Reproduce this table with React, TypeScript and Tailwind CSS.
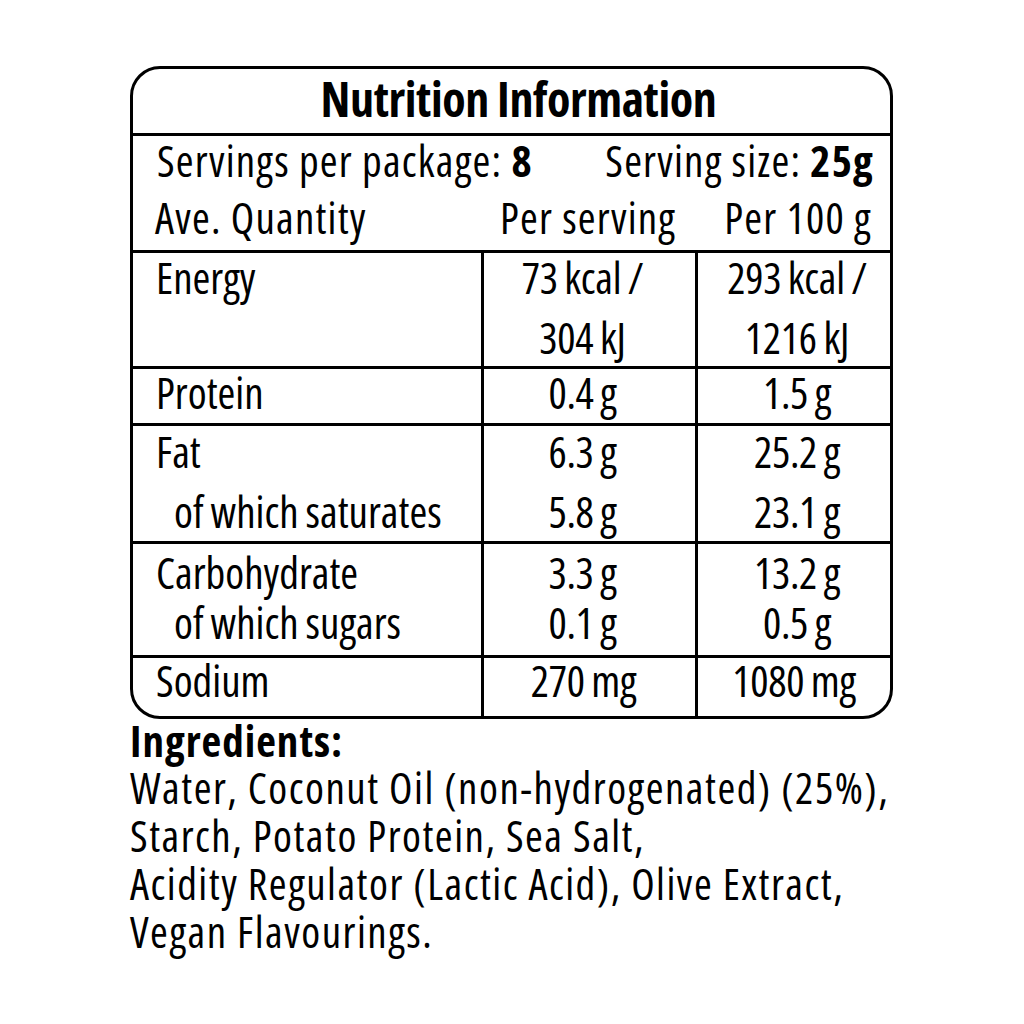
const rows = [
  {
    label: ["Energy"],
    serving: ["73 kcal /", "304 kJ"],
    per100: ["293 kcal /", "1216 kJ"],
    h: "h-[116px]",
    pt: "pt-[1px]",
    gap: "gap-[12px]",
  },
  { label: ["Protein"], serving: ["0.4 g"], per100: ["1.5 g"], h: "h-[57px]", pt: "pt-0", gap: "gap-0" },
  {
    label: ["Fat", "of which saturates"],
    serving: ["6.3 g", "5.8 g"],
    per100: ["25.2 g", "23.1 g"],
    h: "h-[118px]",
    pt: "pt-[2px]",
    gap: "gap-[12px]",
  },
  {
    label: ["Carbohydrate", "of which sugars"],
    serving: ["3.3 g", "0.1 g"],
    per100: ["13.2 g", "0.5 g"],
    h: "h-[114px]",
    pt: "pt-[5px]",
    gap: "gap-[2px]",
  },
]

function Lines({ items, gap, indent }: { items: string[]; gap: string; indent?: boolean }) {
  return (
    <div className={`flex flex-col ${gap}`}>
      {items.map((t, i) => (
        <div key={t} className={indent && i > 0 ? "pl-[18px] [word-spacing:-1px]" : ""}>
          {t}
        </div>
      ))}
    </div>
  )
}

export default function App() {
  return (
    <div
      className="min-h-[1024px] bg-white pl-[130px] pt-[66px] text-black [font-stretch:75%]"
      style={{ fontFamily: '"Open Sans", "Noto Sans", sans-serif' }}
    >
      <div className="w-[763px] overflow-hidden rounded-[30px] border-[3px] border-black text-[43px] leading-[48px]">
        <div className="h-[67px] border-b-[3px] border-black pl-[14px] text-center text-[48px] font-bold leading-[60px] tracking-[-0.4px]">
          Nutrition Information
        </div>

        <div className="h-[117px] border-b-[3px] border-black pt-[1px] tracking-[1.2px]">
          <div className="flex justify-between pl-[24px] pr-[16px]">
            <span>
              Servings per package: <b>8</b>
            </span>
            <span>
              Serving size: <b>25g</b>
            </span>
          </div>
          <div className="mt-[9px] grid grid-cols-[351px_214px_1fr]">
            <div className="pl-[22px]">Ave. Quantity</div>
            <div className="pr-[6px] text-center">Per serving</div>
            <div className="pl-[8px] text-center">Per 100 g</div>
          </div>
        </div>

        {rows.map((r) => (
          <div
            key={r.label[0]}
            className={`grid grid-cols-[351px_214px_1fr] border-b-[3px] border-black ${r.h}`}
          >
            <div className={`border-r-[3px] border-black pl-[23px] ${r.pt}`}>
              <Lines items={r.label} gap={r.gap} indent />
            </div>
            <div
              className={`border-r-[3px] border-black pr-[14px] text-center tracking-[-0.3px] [word-spacing:-1px] ${r.pt}`}
            >
              <Lines items={r.serving} gap={r.gap} />
            </div>
            <div className={`pl-[6px] text-center tracking-[-0.3px] [word-spacing:-1px] ${r.pt}`}>
              <Lines items={r.per100} gap={r.gap} />
            </div>
          </div>
        ))}

        <div className="grid h-[58px] grid-cols-[351px_214px_1fr] leading-[46px]">
          <div className="border-r-[3px] border-black pl-[23px]">Sodium</div>
          <div className="border-r-[3px] border-black pr-[12px] text-center tracking-[-0.3px] [word-spacing:-1px]">
            270 mg
          </div>
          <div className="text-center tracking-[-0.3px] [word-spacing:-1px]">1080 mg</div>
        </div>
      </div>

      <div className="text-[43px] tracking-[1.5px]">
        <div className="font-bold leading-[44px] tracking-[1px]">Ingredients:</div>
        <div className="mt-[1px] leading-[48px]">
          <div>Water, Coconut Oil (non-hydrogenated) (25%),</div>
          <div>Starch, Potato Protein, Sea Salt,</div>
          <div>Acidity Regulator (Lactic Acid), Olive Extract,</div>
          <div>Vegan Flavourings.</div>
        </div>
      </div>
    </div>
  )
}
